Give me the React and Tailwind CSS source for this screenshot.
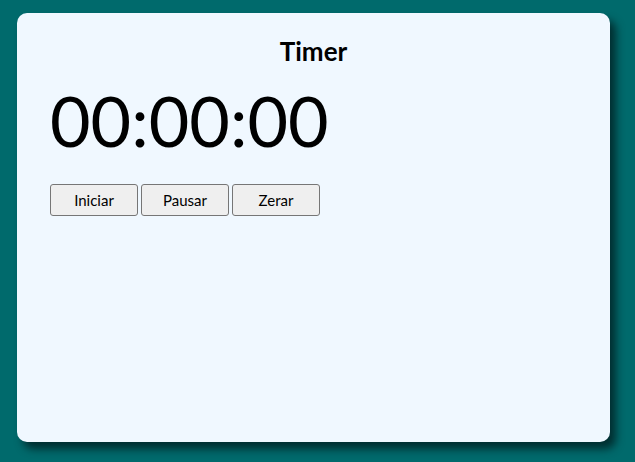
import React, { useState, useEffect, useRef } from "react";

function pad(n) {
    return String(n).padStart(2, "0");
}

export default function App() {
    const [seconds, setSeconds] = useState(0);
    const [running, setRunning] = useState(false);
    const timerRef = useRef(null);

    useEffect(() => {
        if (running) {
            timerRef.current = setInterval(() => setSeconds((s) => s + 1), 1000);
        }
        return () => clearInterval(timerRef.current);
    }, [running]);

    const h = Math.floor(seconds / 3600);
    const m = Math.floor((seconds % 3600) / 60);
    const s = seconds % 60;

    const btn =
        "w-[88px] h-[32px] bg-[#efefef] border border-[#767676] rounded-[3px] text-[15px] text-black hover:bg-[#e5e5e5]";

    return (
        <main className="w-[635px] h-[462px] bg-[#006a6c] pt-[13px] pl-[17px] font-['Lato',sans-serif]">
            <div className="w-[593px] h-[429px] bg-[#f0f8ff] rounded-[10px] shadow-[6px_7px_8px_#002e30] px-[33px] pt-[22px]">
                <h1 className="text-center text-[26px] font-bold leading-[32px] text-black">Timer</h1>
                <p className="text-[70px] leading-[84px] mt-[11px] text-black">
                    {pad(h)}:{pad(m)}:{pad(s)}
                </p>
                <div className="flex gap-[3px] mt-[22px]">
                    <button className={btn} onClick={() => setRunning(true)}>Iniciar</button>
                    <button className={btn} onClick={() => setRunning(false)}>Pausar</button>
                    <button className={btn} onClick={() => { setRunning(false); setSeconds(0); }}>Zerar</button>
                </div>
            </div>
        </main>
    );
}
